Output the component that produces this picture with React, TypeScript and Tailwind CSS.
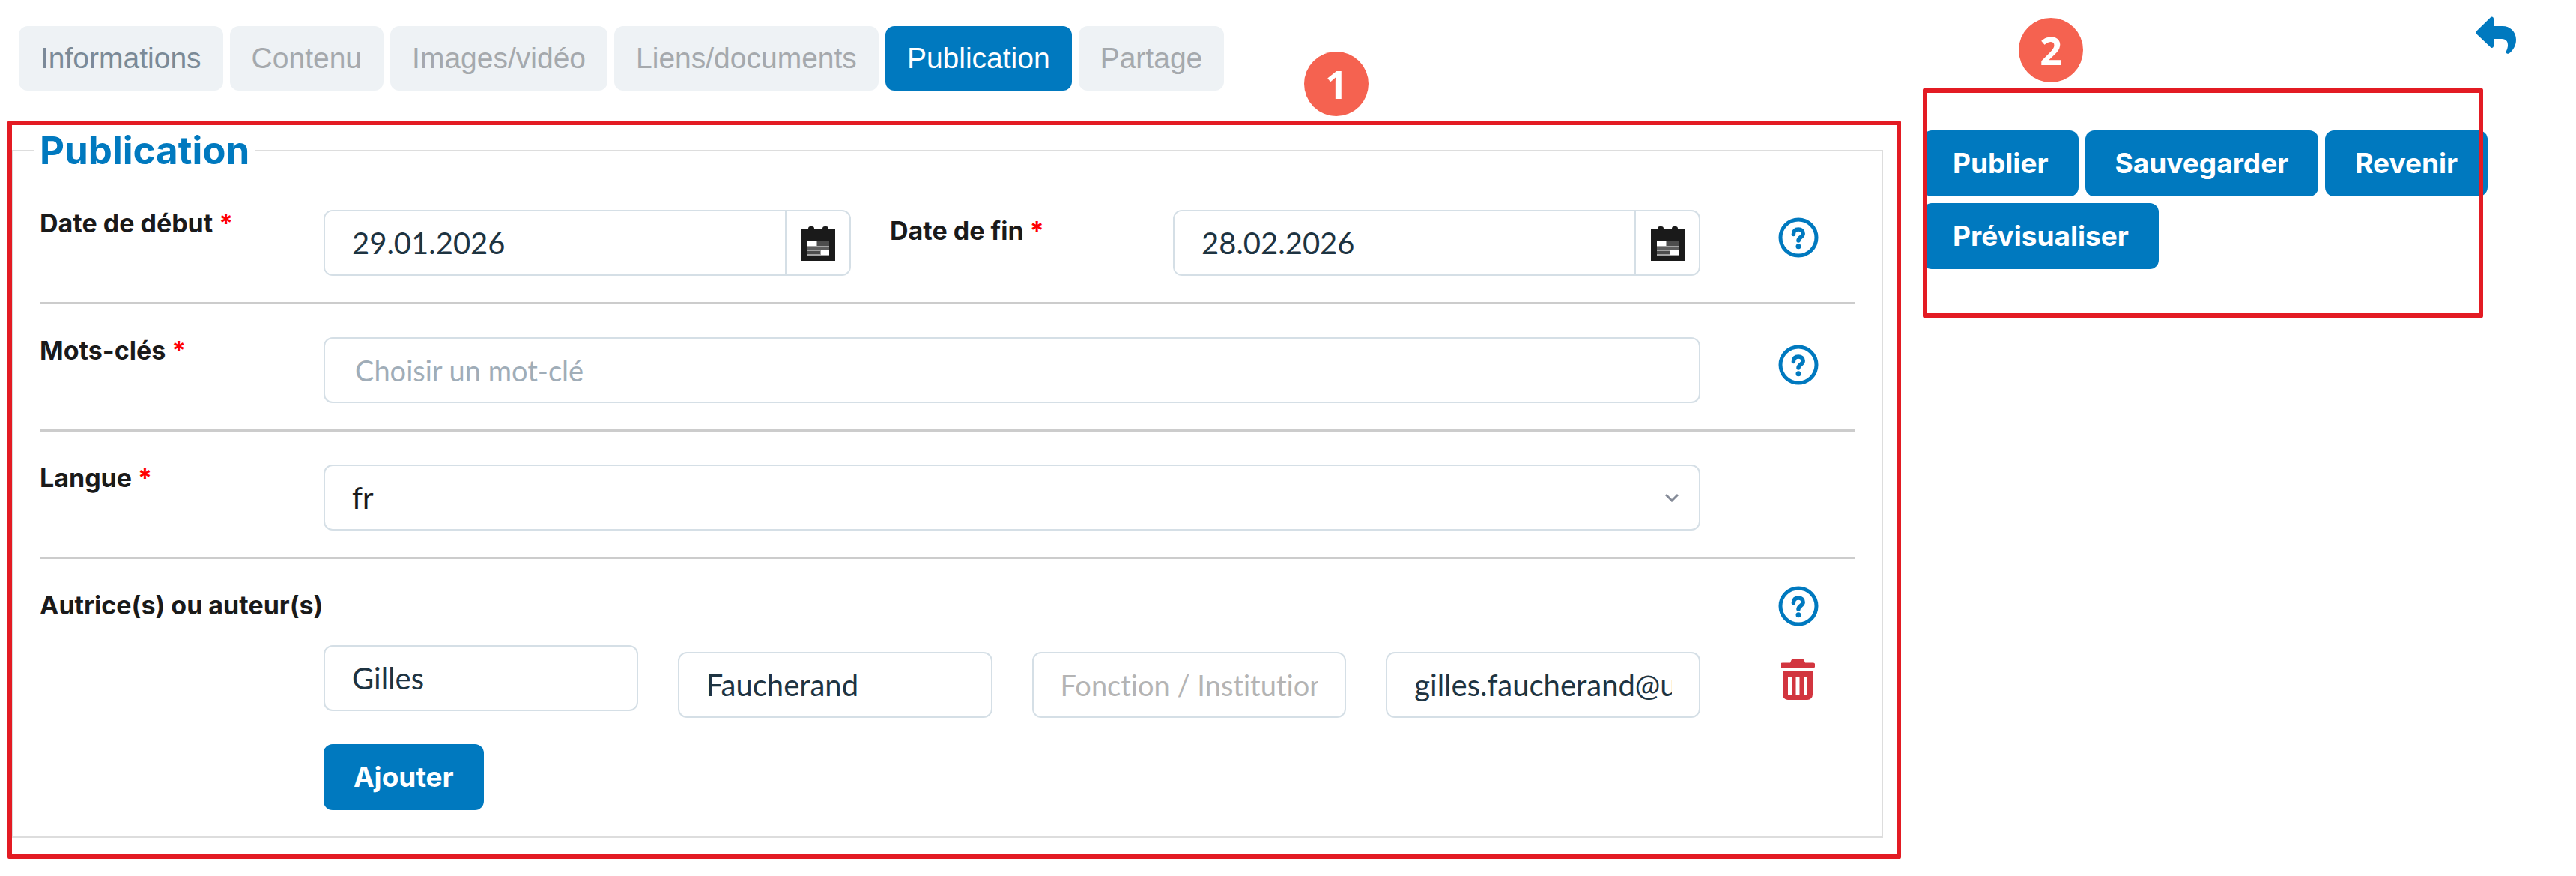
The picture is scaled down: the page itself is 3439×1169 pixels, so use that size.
import { type ComponentProps, type ReactNode, useState } from "react";
import clsx from "clsx";

const tabs = [
  { id: "informations", label: "Informations" },
  { id: "contenu", label: "Contenu" },
  { id: "images", label: "Images/vidéo" },
  { id: "liens", label: "Liens/documents" },
  { id: "publication", label: "Publication" },
  { id: "partage", label: "Partage" },
];

function HelpIcon() {
  return (
    <svg viewBox="0 0 54 54" className="size-[54px]" fill="none" aria-hidden>
      <circle cx="27" cy="27" r="24" stroke="#0079bf" strokeWidth="5" />
      <path
        d="M20.4 22.4c0-4.2 2.7-6.4 6.5-6.4 3.9 0 6.3 2.4 6.3 5.8 0 4.6-6.2 4.8-6.2 9.2"
        stroke="#0079bf"
        strokeWidth="5.5"
        strokeLinecap="round"
      />
      <circle cx="27" cy="38.8" r="3.5" fill="#0079bf" />
    </svg>
  );
}

function CalendarIcon() {
  return (
    <svg viewBox="0 0 45 47" className="h-[47px] w-[45px]" aria-hidden>
      <rect x="9" y="1" width="8" height="8" rx="3" fill="#1a1a1a" />
      <rect x="28" y="1" width="8" height="8" rx="3" fill="#1a1a1a" />
      <rect x="0" y="4" width="45" height="43" fill="#1a1a1a" />
      <rect x="8" y="20" width="29" height="20" fill="#a3a3a3" />
      <rect x="8" y="21" width="12" height="6" fill="#fff" />
      <rect x="21" y="21" width="16" height="6" fill="#4d4d4d" />
      <rect x="8" y="28" width="29" height="4" fill="#5e5e5e" />
      <rect x="8" y="34" width="17" height="4" fill="#4d4d4d" />
      <rect x="26" y="33" width="11" height="6" fill="#fff" />
    </svg>
  );
}

function TrashIcon() {
  return (
    <svg viewBox="0 0 46 55" className="h-[55px] w-[46px]" fill="#d2353f" aria-hidden>
      <path d="M13 5.5l1.5-3.500q1-2 3-2h11q2 0 3 2l1.500 3.500H43a3 3 0 0 1 0 7H3a3 3 0 0 1 0-7z" />
      <path
        fillRule="evenodd"
        d="M3 16.5h40V48a7 7 0 0 1-7 7H10a7 7 0 0 1-7-7zM10 24v24h5V24zM20.5 24v24h5V24zM31 24v24h5V24z"
      />
    </svg>
  );
}

function BackIcon() {
  return (
    <svg viewBox="0 0 54 50" className="h-[50px] w-[54px]" fill="currentColor" aria-hidden>
      <path d="M.8 20L20 1.2c1.5-1.500 4-.6 4 1.800v10h12c10 0 18 7.500 18 18 0 8-4 14.500-9.500 18.500-1.500 1-4.500-.5-4-2.500C44.500 40 44.500 30 35 30H24v9.500c0 2.400-2.500 3.300-4 1.800L.8 23q-1.500-1.500 0-3z" />
    </svg>
  );
}

function HelpButton({ topic }: { topic: string }) {
  return (
    <button type="button" aria-label={`Aide : ${topic}`} className="ml-[104px] block">
      <HelpIcon />
    </button>
  );
}

function FieldLabel({
  htmlFor,
  required,
  className,
  children,
}: {
  htmlFor: string;
  required?: boolean;
  className?: string;
  children: ReactNode;
}) {
  return (
    <label
      htmlFor={htmlFor}
      className={clsx(
        "font-[Inter,sans-serif] text-[34px] leading-9 font-bold whitespace-nowrap text-[#1a1a1a]",
        className,
      )}
    >
      {children}
      {required && <span className="text-[#ff0000]"> *</span>}
    </label>
  );
}

function TextInput({ className, ...props }: ComponentProps<"input">) {
  return (
    <input
      type="text"
      className={clsx(
        "h-[88px] w-full min-w-0 rounded-xl border-2 border-[#d5dfe6] bg-white px-9 text-[40px] text-[#1e3442] outline-none placeholder:text-[38px]",
        className,
      )}
      {...props}
    />
  );
}

function DateInput({ id, defaultValue }: { id: string; defaultValue: string }) {
  return (
    <div className="flex h-[88px] min-w-0 flex-1 overflow-hidden rounded-xl border-2 border-[#d5dfe6]">
      <input
        id={id}
        type="text"
        defaultValue={defaultValue}
        className="min-w-0 flex-1 bg-white px-9 text-[40px] text-[#1e3442] outline-none"
      />
      <button
        type="button"
        aria-label="Ouvrir le calendrier"
        className="flex w-[86px] items-center justify-center border-l-2 border-[#d5dfe6]"
      >
        <CalendarIcon />
      </button>
    </div>
  );
}

function Row({ children }: { children: ReactNode }) {
  return (
    <div className="grid grid-cols-[379fr_1838fr_207fr] items-start border-b-3 border-[#cccccc] pt-11 pb-[35px]">
      {children}
    </div>
  );
}

function ActionButton({ children }: { children: ReactNode }) {
  return (
    <button
      type="button"
      className="h-[88px] rounded-xl bg-[#0079bf] px-10 font-[Inter,sans-serif] text-[37px] font-bold text-white"
    >
      {children}
    </button>
  );
}

function Marker({ className, children }: { className: string; children: ReactNode }) {
  return (
    <span
      className={clsx(
        "absolute flex size-[86px] items-center justify-center rounded-full bg-[#f56250] font-['Open_Sans',sans-serif] text-[52px] font-bold text-white",
        className,
      )}
    >
      {children}
    </span>
  );
}

export default function App() {
  const [activeTab, setActiveTab] = useState("publication");

  return (
    <div className="grid min-h-screen grid-cols-[2538fr_901fr] items-start bg-white font-[Lato,sans-serif] [font-variant-ligatures:none]">
      <main className="pt-[35px] pl-2.5">
        <nav className="flex gap-[9px] pl-[15px]">
          {tabs.map((tab) => (
            <button
              key={tab.id}
              type="button"
              onClick={() => setActiveTab(tab.id)}
              className={clsx(
                "h-[86px] rounded-xl px-[29px] font-['Liberation_Sans',sans-serif] text-[39px]",
                activeTab === tab.id
                  ? "bg-[#0079bf] text-white"
                  : tab.id === "informations"
                    ? "bg-[#eef2f5] text-[#7b8a97]"
                    : "bg-[#eef2f5] text-[#a5a9ad]",
              )}
            >
              {tab.label}
            </button>
          ))}
        </nav>

        <section className="relative mt-10 rounded-xs border-6 border-[#e31b23] pr-[18px] pb-[22px]">
          <Marker className="-top-[98px] right-[705px]">1</Marker>

          <fieldset className="min-w-0 border-2 border-[#dddddd] pr-[35px] pb-[35px] pl-[27px]">
            <legend className="px-2 font-[Inter,sans-serif] text-[51px] leading-[68px] font-bold text-[#0079bf]">
              Publication
            </legend>

            <div className="pt-px pl-2">
              <Row>
                <FieldLabel htmlFor="start" required>
                  Date de début
                </FieldLabel>
                <div className="flex items-start">
                  <DateInput id="start" defaultValue="29.01.2026" />
                  <FieldLabel htmlFor="end" required className="mt-2.5 ml-[52px] w-[378px]">
                    Date de fin
                  </FieldLabel>
                  <DateInput id="end" defaultValue="28.02.2026" />
                </div>
                <div className="pt-2.5">
                  <HelpButton topic="dates" />
                </div>
              </Row>

              <Row>
                <FieldLabel htmlFor="keywords" required>
                  Mots-clés
                </FieldLabel>
                <TextInput
                  id="keywords"
                  placeholder="Choisir un mot-clé"
                  className="pl-10 placeholder:text-[#a0adb8]"
                />
                <div className="pt-2.5">
                  <HelpButton topic="mots-clés" />
                </div>
              </Row>

              <Row>
                <FieldLabel htmlFor="language" required>
                  Langue
                </FieldLabel>
                <div className="relative">
                  <select
                    id="language"
                    defaultValue="fr"
                    className="h-[88px] w-full appearance-none rounded-xl border-2 border-[#d5dfe6] bg-white px-9 text-[40px] text-[#1a1a1a] outline-none"
                  >
                    <option value="fr">fr</option>
                  </select>
                  <svg
                    viewBox="0 0 20 12"
                    className="pointer-events-none absolute top-[38px] right-7 h-3 w-5"
                    fill="none"
                    aria-hidden
                  >
                    <path d="M2 2l8 8 8-8" stroke="#858b98" strokeWidth="3" />
                  </svg>
                </div>
              </Row>

              <div className="grid grid-cols-[379fr_1838fr_207fr] items-start pt-9">
                <FieldLabel htmlFor="firstname" className="mt-2">
                  Autrice(s) ou auteur(s)
                </FieldLabel>
                <div className="col-start-3">
                  <HelpButton topic="auteurs" />
                </div>

                <div className="col-start-2 mt-[25px] flex items-start gap-[53px]">
                  <TextInput id="firstname" aria-label="Prénom" defaultValue="Gilles" />
                  <TextInput aria-label="Nom" defaultValue="Faucherand" className="mt-[9px]" />
                  <TextInput
                    aria-label="Fonction / Institution"
                    placeholder="Fonction / Institution"
                    className="mt-[9px] placeholder:text-[#b4b4b4]"
                  />
                  <TextInput
                    aria-label="E-mail"
                    defaultValue="gilles.faucherand@un"
                    className="mt-[9px]"
                  />
                </div>
                <button type="button" aria-label="Supprimer" className="mt-[43px] ml-[107px]">
                  <TrashIcon />
                </button>

                <div className="col-start-2 mt-[35px] flex">
                  <ActionButton>Ajouter</ActionButton>
                </div>
              </div>
            </div>
          </fieldset>
        </section>
      </main>

      <aside className="relative pl-[29px]">
        <div className="flex justify-end pt-[22px] pr-20">
          <a href="#retour" aria-label="Retour" className="text-[#0079bf]">
            <BackIcon />
          </a>
        </div>
        <div className="mt-[102px] flex flex-wrap gap-[9px] pr-20">
          <ActionButton>Publier</ActionButton>
          <ActionButton>Sauvegarder</ActionButton>
          <ActionButton>Revenir</ActionButton>
          <ActionButton>Prévisualiser</ActionButton>
        </div>

        <Marker className="top-6 left-[157px]">2</Marker>
        <div className="pointer-events-none absolute top-[118px] right-[124px] left-[29px] h-[306px] rounded-xs border-6 border-[#e31b23]" />
      </aside>
    </div>
  );
}
